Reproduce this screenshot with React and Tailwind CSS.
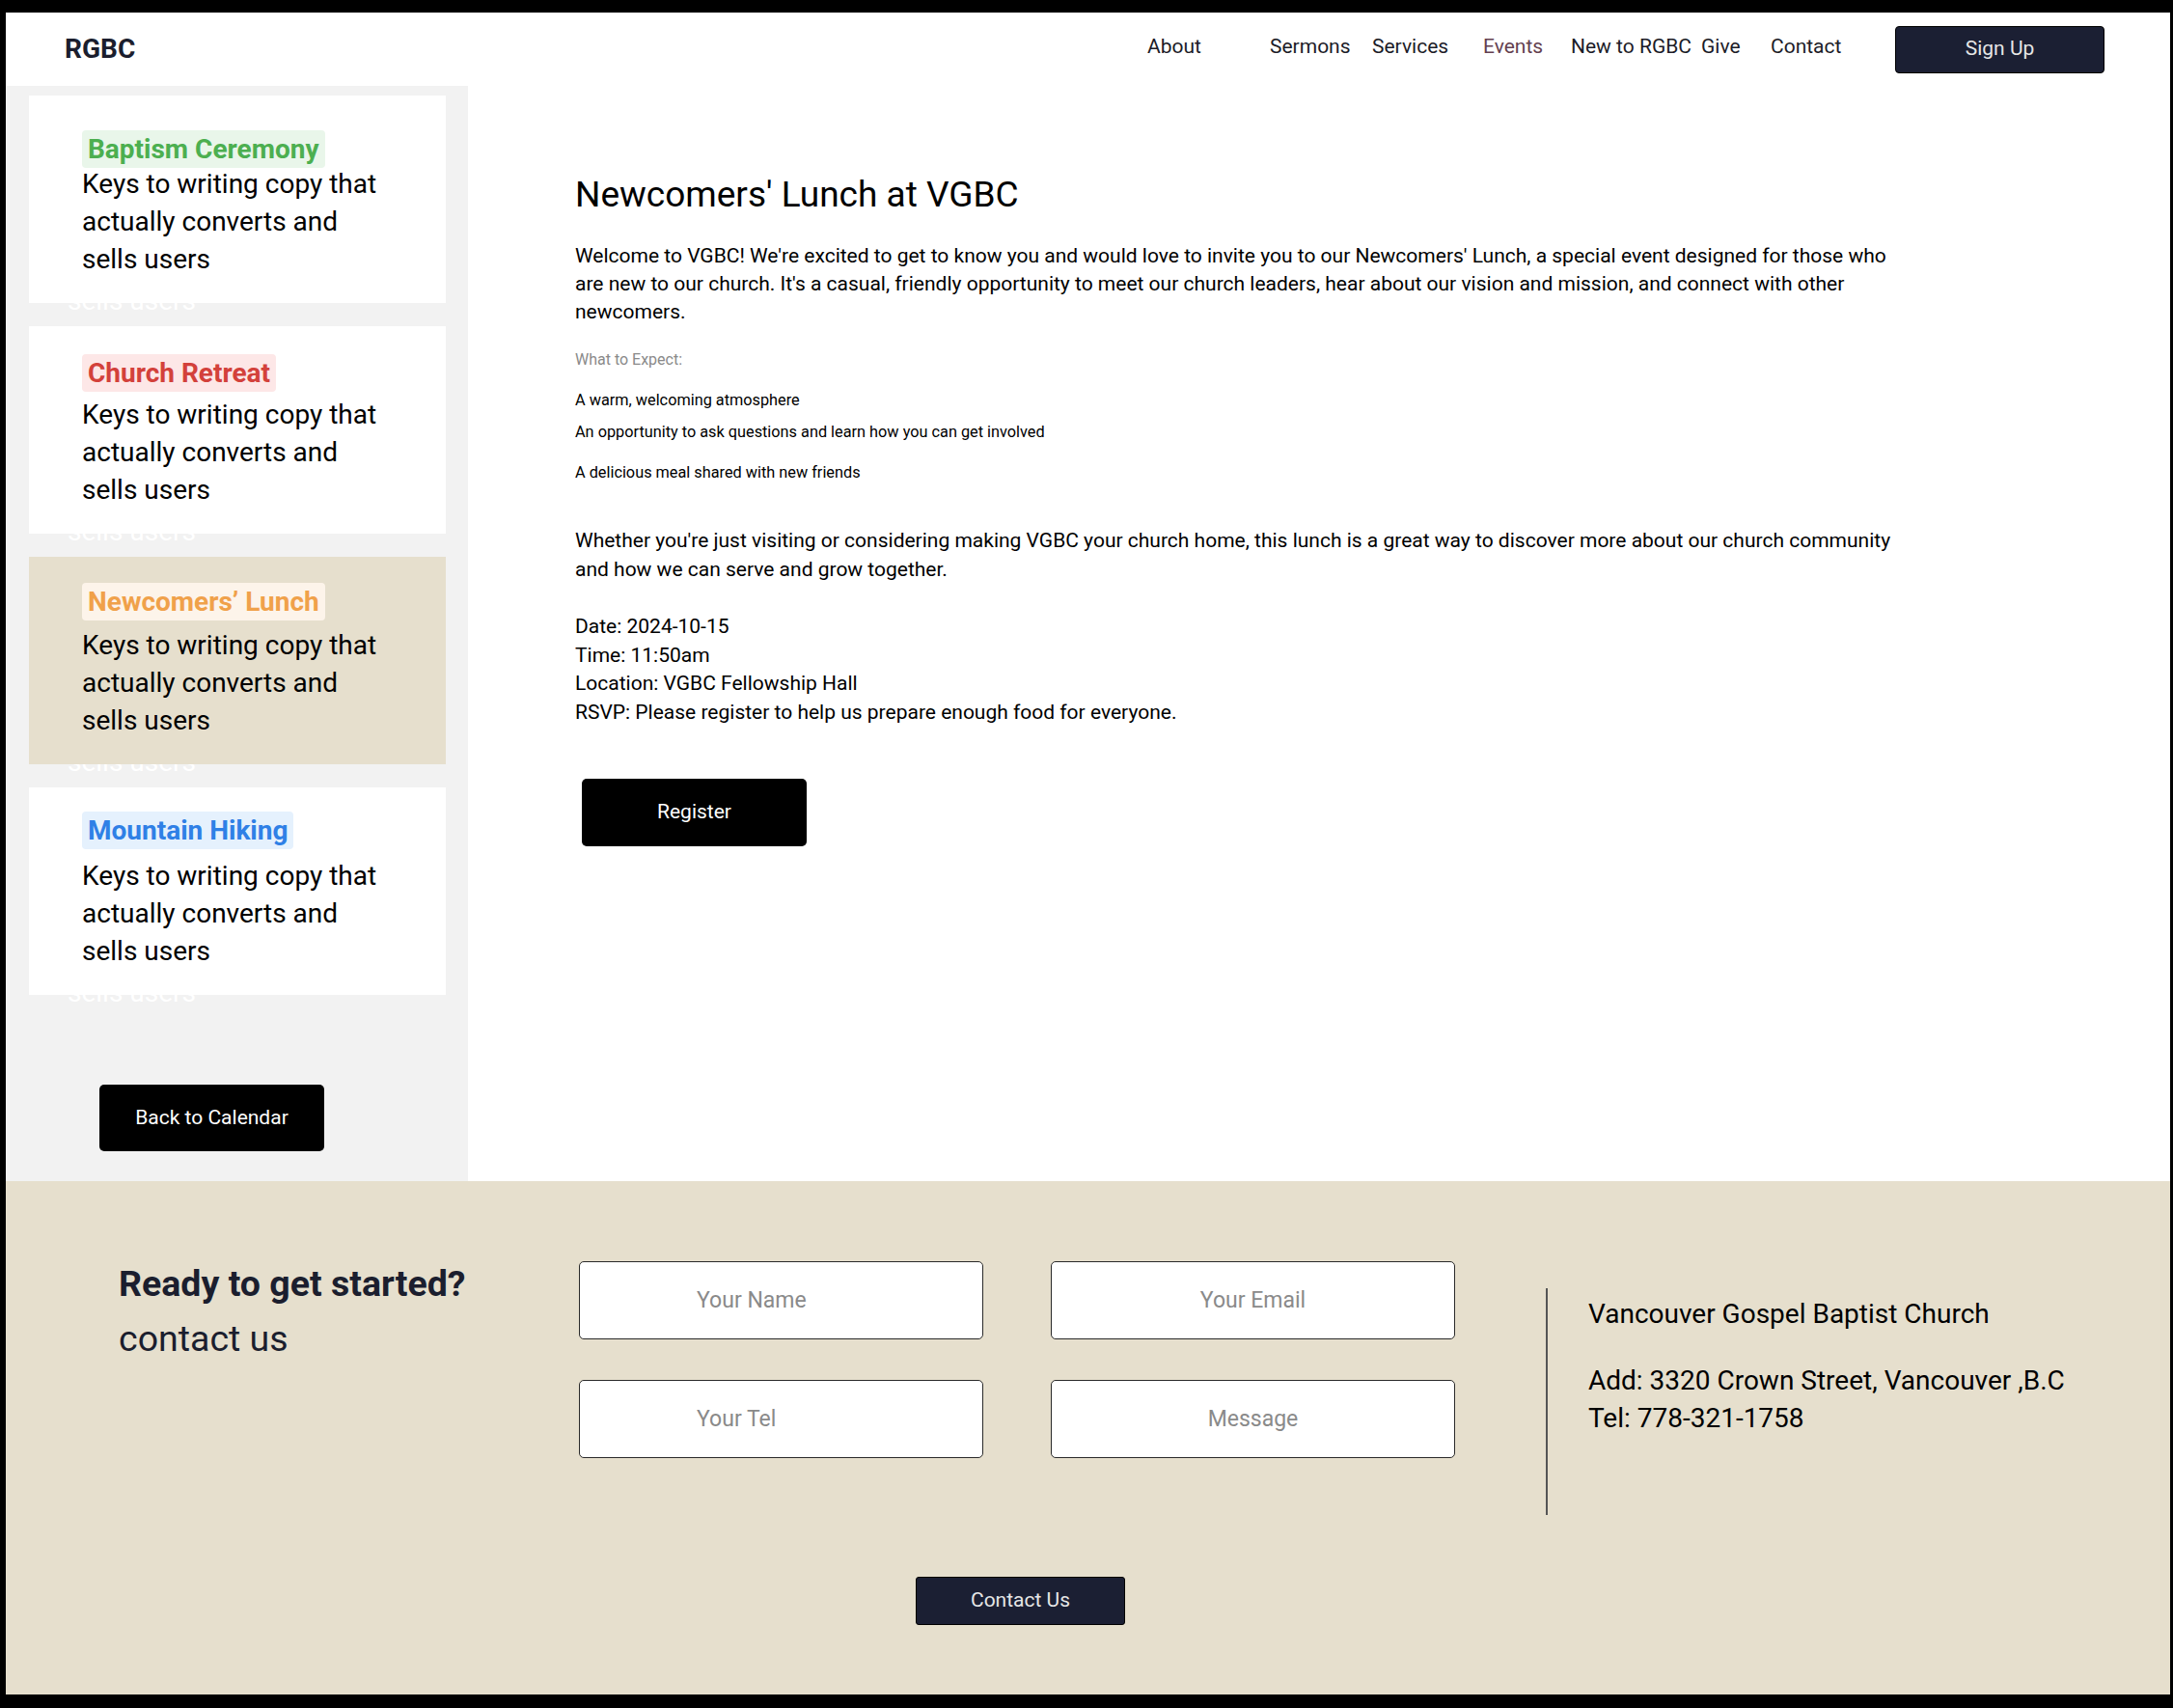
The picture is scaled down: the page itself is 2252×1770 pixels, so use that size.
import { useState } from 'react'

// Liste des événements de la colonne gauche
const evenements = [
  {
    id: 'bapteme',
    titre: 'Baptism Ceremony',
    couleur: 'text-[#4caf50] bg-[#e9f6ea]',
    decalage: 'mt-[36px]',
    corps: '-mt-[3px]',
  },
  {
    id: 'retraite',
    titre: 'Church Retreat',
    couleur: 'text-[#d3413b] bg-[#fde7e7]',
    decalage: 'mt-[29px]',
    corps: 'mt-[4px]',
  },
  {
    id: 'lunch',
    titre: 'Newcomers’ Lunch',
    couleur: 'text-[#f0a14a] bg-[#fdf4ea]',
    decalage: 'mt-[27px]',
    corps: 'mt-[6px]',
  },
  {
    id: 'rando',
    titre: 'Mountain Hiking',
    couleur: 'text-[#2f80e6] bg-[#e5f1fd]',
    decalage: 'mt-[25px]',
    corps: 'mt-[8px]',
  },
]

const liens = [
  { nom: 'About', w: 'w-[127px]' },
  { nom: 'Sermons', w: 'w-[106px]' },
  { nom: 'Services', w: 'w-[115px]' },
  { nom: 'Events', w: 'w-[91px]', actif: true },
  { nom: 'New to RGBC', w: 'w-[135px]' },
  { nom: 'Give', w: 'w-[72px]' },
  { nom: 'Contact', w: 'w-[129px]' },
]

function CarteEvenement({ ev, actif, onClick }) {
  return (
    <div className="relative h-[215px] cursor-pointer" onClick={onClick}>
      {/* texte fantôme blanc qui dépasse sous la carte */}
      <span className="absolute left-[40px] top-[193px] whitespace-nowrap text-[28px] leading-[39px] text-white">
        sells users
      </span>
      <div className={`relative z-10 flex h-full flex-col pl-[55px] ${actif ? 'bg-[#e6dfcd]' : 'bg-white'}`}>
        <span className={`h-[39px] self-start rounded-[4px] px-[6px] text-[28px] font-bold leading-[39px] ${ev.decalage} ${ev.couleur}`}>
          {ev.titre}
        </span>
        <p className={`w-[320px] text-[28px] leading-[39px] text-black ${ev.corps}`}>
          Keys to writing copy that actually converts and sells users
        </p>
      </div>
    </div>
  )
}

function Champ({ placeholder, centre }) {
  return (
    <input
      type="text"
      placeholder={placeholder}
      className={`h-[81px] w-[419px] rounded-[5px] border border-[#2a2a2a] bg-white text-[23px] text-black outline-none placeholder:text-[#8a8a8a] ${
        centre ? 'text-center' : 'pl-[121px] text-left'
      }`}
    />
  )
}

export default function App() {
  const [selection, setSelection] = useState('lunch')

  return (
    <div className="min-h-[1770px] bg-black pb-[14px] pl-[6px] pr-[3px] pt-[13px] font-['Roboto',sans-serif]">
      {/* En-tête */}
      <header className="flex h-[76px] items-center bg-white pl-[61px] pr-[68px]">
        <span className="text-[28px] font-bold text-[#1b1e2e]">RGBC</span>
        <nav className="mb-[5px] ml-auto flex items-center text-[21px] text-[#1c1c28]">
          {liens.map((l) => (
            <a key={l.nom} href="#" className={`${l.w} whitespace-nowrap ${l.actif ? 'text-[#643f4f]' : ''}`}>
              {l.nom}
            </a>
          ))}
        </nav>
        <button className="h-[49px] w-[217px] rounded-[4px] border-[1.5px] border-black bg-[#1b1f33] text-[21px] text-[#e6e6e6]">
          Sign Up
        </button>
      </header>

      <div className="flex bg-white">
        {/* Colonne des événements */}
        <aside className="w-[479px] shrink-0 bg-[#f2f2f2] pb-[31px] pl-[24px] pr-[23px] pt-[10px]">
          <div className="flex flex-col gap-[24px]">
            {evenements.map((ev) => (
              <CarteEvenement key={ev.id} ev={ev} actif={selection === ev.id} onClick={() => setSelection(ev.id)} />
            ))}
          </div>
          <button className="ml-[73px] mt-[93px] block h-[69px] w-[233px] rounded-[5px] bg-black text-[21px] text-white">
            Back to Calendar
          </button>
        </aside>

        {/* Détail de l'événement */}
        <main className="flex-1 pl-[111px] pt-[91px] text-black">
          <h1 className="text-[37px] leading-[44px]">Newcomers' Lunch at VGBC</h1>
          <p className="mt-[27px] w-[1380px] text-[21px] leading-[29px]">
            Welcome to VGBC! We're excited to get to know you and would love to invite you to our Newcomers' Lunch, a
            special event designed for those who are new to our church. It's a casual, friendly opportunity to meet our
            church leaders, hear about our vision and mission, and connect with other newcomers.
          </p>
          <p className="mt-[23px] text-[16px] leading-[24px] text-[#8a8a8a]">What to Expect:</p>
          <ul className="mt-[18px] text-[16.3px] leading-[24px]">
            <li>A warm, welcoming atmosphere</li>
            <li className="mt-[9px]">An opportunity to ask questions and learn how you can get involved</li>
            <li className="mt-[18px]">A delicious meal shared with new friends</li>
          </ul>
          <p className="mt-[44px] w-[1380px] text-[21px] leading-[29.5px]">
            Whether you're just visiting or considering making VGBC your church home, this lunch is a great way to
            discover more about our church community and how we can serve and grow together.
          </p>
          <p className="mt-[30px] text-[21px] leading-[29.5px]">
            Date: 2024-10-15
            <br />
            Time: 11:50am
            <br />
            Location: VGBC Fellowship Hall
            <br />
            RSVP: Please register to help us prepare enough food for everyone.
          </p>
          <button className="ml-[7px] mt-[54px] block h-[70px] w-[233px] rounded-[5px] bg-black text-[21px] text-white">
            Register
          </button>
        </main>
      </div>

      {/* Pied de page contact */}
      <footer className="flex bg-[#e6dfcd] pb-[72px] pl-[117px] pt-[83px]">
        <div className="w-[477px] shrink-0 pt-[1px] text-[#1b1e2e]">
          <h2 className="text-[37.5px] font-bold leading-[44px]">Ready to get started?</h2>
          <p className="mt-[13px] text-[37.5px] leading-[44px]">contact us</p>
        </div>

        <div className="w-[908px] shrink-0">
          <div className="grid grid-cols-[419px_419px] gap-x-[70px] gap-y-[42px]">
            <Champ placeholder="Your Name" />
            <Champ placeholder="Your Email" centre />
            <Champ placeholder="Your Tel" />
            <Champ placeholder="Message" centre />
          </div>
          <button className="ml-[349px] mt-[123px] block h-[50px] w-[217px] rounded-[3px] border-[1.5px] border-black bg-[#1b1f33] text-[21px] text-[#e6e6e6]">
            Contact Us
          </button>
        </div>

        <div className="ml-[94px] mt-[28px] h-[235px] w-[2px] shrink-0 bg-[#555]" />

        <div className="ml-[42px] mt-[35px] whitespace-nowrap text-[28px] leading-[39px] text-black">
          <p>Vancouver Gospel Baptist Church</p>
          <p className="mt-[30px]">Add: 3320 Crown Street, Vancouver ,B.C</p>
          <p>Tel: 778-321-1758</p>
        </div>
      </footer>
    </div>
  )
}
